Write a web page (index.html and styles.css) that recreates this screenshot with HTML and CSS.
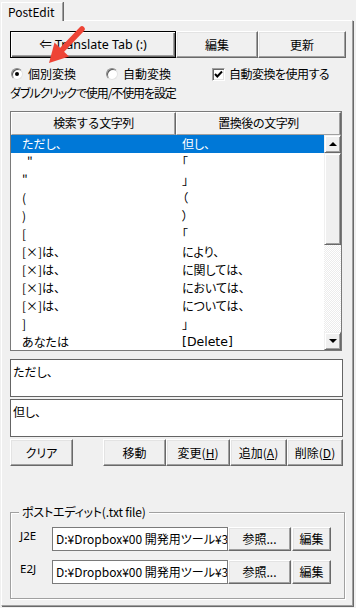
FILE: index.html
```html
<!DOCTYPE html>
<html lang="ja">
<head>
<meta charset="utf-8">
<link rel="stylesheet" href="styles.css">
</head>
<body>
<div class="window">
  <div class="tabs"><div class="tab">PostEdit</div></div>
  <div class="panel">
    <div class="toprow">
      <button class="btn btn-default btn-translate">⇐ Translate Tab (:)</button>
      <button class="btn btn-edit">編集</button>
      <button class="btn btn-update">更新</button>
    </div>
    <div class="options">
      <label class="opt opt-radio1"><span class="radio checked"></span>個別変換</label>
      <label class="opt opt-radio2"><span class="radio"></span>自動変換</label>
      <label class="opt opt-check"><span class="check"><svg viewBox="0 0 11 11" width="11" height="11"><polyline points="2,5 4.3,7.5 9,2.5" fill="none" stroke="#000" stroke-width="2"/></svg></span><span class="check-text">自動変換を使用する</span></label>
    </div>
    <div class="hint">ダブルクリックで使用/不使用を設定</div>
    <div class="list">
      <div class="list-head">
        <div class="hcell hcell1">検索する文字列</div>
        <div class="hcell hcell2">置換後の文字列</div>
      </div>
      <div class="list-body">
        <div class="rows">
          <div class="row selected"><span class="c1">ただし、</span><span class="c2">但し、</span></div>
          <div class="row"><span class="c1 shift">"</span><span class="c2">｢</span></div>
          <div class="row"><span class="c1">"</span><span class="c2">｣</span></div>
          <div class="row"><span class="c1">(</span><span class="c2">（</span></div>
          <div class="row"><span class="c1">)</span><span class="c2">）</span></div>
          <div class="row"><span class="c1">[</span><span class="c2">｢</span></div>
          <div class="row"><span class="c1">[×]は、</span><span class="c2">により、</span></div>
          <div class="row"><span class="c1">[×]は、</span><span class="c2">に関しては、</span></div>
          <div class="row"><span class="c1">[×]は、</span><span class="c2">においては、</span></div>
          <div class="row"><span class="c1">[×]は、</span><span class="c2">については、</span></div>
          <div class="row"><span class="c1">]</span><span class="c2">｣</span></div>
          <div class="row"><span class="c1">あなたは</span><span class="c2 latin">[Delete]</span></div>
        </div>
        <div class="vscroll">
          <div class="sbtn"><span class="tri tri-up"></span></div>
          <div class="thumb"></div>
          <div class="track"></div>
          <div class="sbtn"><span class="tri tri-down"></span></div>
        </div>
      </div>
    </div>
    <div class="textbox tb1">ただし、</div>
    <div class="textbox tb2">但し、</div>
    <div class="actions">
      <button class="btn a-clear">クリア</button>
      <button class="btn a-move">移動</button>
      <button class="btn a-change">変更(<u>H</u>)</button>
      <button class="btn a-add">追加(<u>A</u>)</button>
      <button class="btn a-del">削除(<u>D</u>)</button>
    </div>
    <div class="group">
      <div class="group-label">ポストエディット(.txt file)</div>
      <div class="frow frow1">
        <span class="flabel">J2E</span>
        <div class="path">D:¥Dropbox¥00 開発用ツール¥3</div>
        <button class="btn fref">参照...</button>
        <button class="btn fedit">編集</button>
      </div>
      <div class="frow frow2">
        <span class="flabel">E2J</span>
        <div class="path">D:¥Dropbox¥00 開発用ツール¥3</div>
        <button class="btn fref">参照...</button>
        <button class="btn fedit">編集</button>
      </div>
    </div>
  </div>
  <svg class="arrow" viewBox="0 0 50 50" width="50" height="50">
    <line x1="42" y1="9" x2="21" y2="31" stroke="#ee4436" stroke-width="5.5" stroke-linecap="round"/>
    <polygon points="9,43 14.5,22.5 29,36.5" fill="#ee4436"/>
  </svg>
</div>
</body>
</html>
```

FILE: styles.css
```css
* { box-sizing: border-box; }
html, body { margin: 0; padding: 0; }
body {
  width: 356px;
  height: 608px;
  overflow: hidden;
  background: #f0f0f0;
  color: #000;
  font-family: "Noto Sans CJK JP", "Noto Sans", sans-serif;
  font-size: 12px;
  font-feature-settings: "palt";
}
.window {
  position: relative;
  height: 608px;
  padding: 2px 0 0 1px;
}
.tabs { display: flex; height: 18px; }
.tab {
  position: relative;
  z-index: 1;
  width: 62px;
  height: 19px;
  padding-left: 6px;
  line-height: 17px;
  background: #f0f0f0;
  border: 1px solid;
  border-color: #fff #a0a0a0 transparent #fff;
  border-bottom: none;
  box-shadow: 1px 0 0 #696969;
}
.panel {
  width: 352px;
  height: 586px;
  padding: 0 0 0 8px;
  border: 1px solid;
  border-color: #fff #a0a0a0 #a0a0a0 #fff;
  box-shadow: 1px 1px 0 #696969;
}
.btn {
  font: inherit;
  font-feature-settings: "palt";
  color: #000;
  padding: 0;
  margin: 0;
  background: #f0f0f0;
  border: 1px solid;
  border-color: #fff #696969 #696969 #fff;
  box-shadow: inset -1px -1px 0 #a0a0a0, inset 1px 1px 0 #e3e3e3;
  line-height: 16px;
}
.btn u { text-decoration: underline; text-underline-offset: 1px; }
.btn-default {
  border: 1px solid #000;
  box-shadow: inset 1px 1px 0 #fff, inset -1px -1px 0 #696969, inset -2px -2px 0 #a0a0a0;
}
.toprow { display: flex; margin-top: 10px; height: 27px; }
.btn-translate { width: 166px; font-family: "Noto Sans", "Noto Sans CJK JP", sans-serif; font-size: 12.5px; }
.btn-edit { width: 82px; }
.btn-update { width: 88px; }

.options { display: flex; align-items: center; margin-top: 8px; height: 16px; }
.opt { display: flex; align-items: center; line-height: 16px; }
.opt-radio1 { width: 95px; margin-left: 1px; }
.opt-radio2 { width: 106px; }
.check-text { letter-spacing: -0.5px; }
.radio {
  width: 12px; height: 12px; border-radius: 50%;
  background: #fff;
  border: 1px solid;
  border-color: #8a8a8a #e3e3e3 #e3e3e3 #8a8a8a;
  box-shadow: inset 1px 1px 0 #5a5a5a;
  margin-right: 5px;
  display: flex; align-items: center; justify-content: center;
}
.radio.checked::after {
  content: "";
  width: 4px; height: 4px; border-radius: 50%; background: #000;
}
.check {
  width: 13px; height: 13px;
  background: #fff;
  border: 1px solid;
  border-color: #a0a0a0 #fff #fff #a0a0a0;
  box-shadow: inset 1px 1px 0 #696969, inset -1px -1px 0 #e3e3e3;
  margin-right: 4px;
  display: flex; align-items: center; justify-content: center;
}
.check svg { display: block; }

.hint { margin-top: 3px; line-height: 16px; height: 16px; letter-spacing: -1.1px; }

.list {
  margin-top: 10px;
  width: 332px;
  height: 240px;
  border: 1px solid #7a7a7a;
  background: #fff;
  display: flex;
  flex-direction: column;
}
.list-head { display: flex; height: 23px; flex: none; background: #f0f0f0; }
.hcell {
  text-align: center;
  line-height: 20px;
  font-feature-settings: normal;
  letter-spacing: -0.5px;
  border: 1px solid;
  border-color: #fff #696969 #a0a0a0 #fff;
  box-shadow: inset -1px 0 0 #a0a0a0;
}
.hcell1 { width: 165px; }
.hcell2 { flex: 1; }
.list-body { display: flex; flex: 1; overflow: hidden; }
.rows { width: 314px; overflow: hidden; }
.row { display: flex; height: 18px; line-height: 18px; white-space: nowrap; }
.row.selected { background: #0078d7; color: #fff; }
.c1 { width: 165px; padding-left: 11px; }
.c1.shift { padding-left: 16px; }
.c2 { padding-left: 6px; }
.latin { font-family: "DejaVu Sans", sans-serif; font-size: 12.5px; }
.vscroll {
  width: 17px;
  display: flex;
  flex-direction: column;
  background: repeating-conic-gradient(#fff 0 25%, #ececec 0 50%) 0 0 / 2px 2px;
}
.sbtn, .thumb {
  flex: none;
  background: #f0f0f0;
  border: 1px solid;
  border-color: #f0f0f0 #696969 #696969 #f0f0f0;
  box-shadow: inset 1px 1px 0 #fff, inset -1px -1px 0 #a0a0a0;
}
.sbtn { height: 18px; display: flex; align-items: center; justify-content: center; }
.thumb { height: 92px; }
.track { flex: 1; }
.tri { width: 0; height: 0; border-left: 4px solid transparent; border-right: 4px solid transparent; }
.tri-up { border-bottom: 4px solid #000; }
.tri-down { border-top: 4px solid #000; }

.textbox {
  width: 333px;
  height: 38px;
  background: #fff;
  border: 1px solid #646464;
  padding: 3px 0 0 2px;
  line-height: 18px;
}
.tb1 { margin-top: 8px; }
.tb2 { margin-top: 2px; }

.actions { display: flex; margin-top: 2px; height: 27px; }
.a-clear { width: 63px; margin-right: 30px; }
.a-move { width: 63px; }
.a-change { width: 64px; }
.a-add { width: 57px; }
.a-del { width: 56px; }

.group {
  margin-top: 46px;
  width: 335px;
  border: 1px solid #a0a0a0;
  box-shadow: inset 1px 1px 0 #fff, 1px 1px 0 #fff;
  padding: 0 0 14px 0;
}
.group-label {
  width: fit-content;
  margin: -9px 0 0 8px;
  padding: 0 3px;
  background: #f0f0f0;
  line-height: 16px;
  letter-spacing: -0.2px;
}
.frow { display: flex; height: 24px; padding-left: 9px; }
.frow1 { margin-top: 7px; }
.frow2 { margin-top: 9px; }
.flabel { width: 32px; line-height: 16px; margin-top: 1px; align-self: flex-start; font-family: "Noto Sans", sans-serif; font-size: 11.5px; }
.path {
  width: 176px;
  background: #fff;
  border: 1px solid #7a7a7a;
  padding-left: 3px;
  line-height: 22px;
  white-space: nowrap;
  overflow: hidden;
}
.fref { width: 63px; }
.fedit { width: 39px; margin-left: 1px; }

.arrow { position: absolute; left: 40px; top: 20px; }
```
